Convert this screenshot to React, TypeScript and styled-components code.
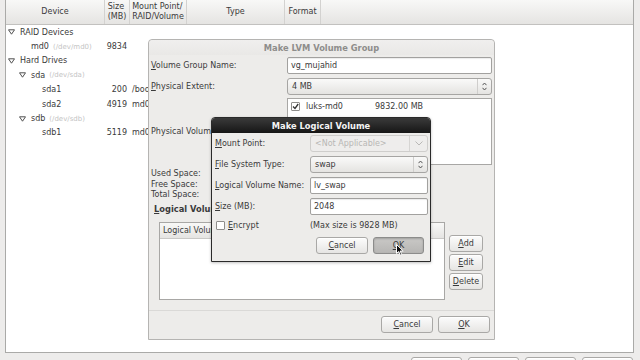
import React from "react";
import styled, { createGlobalStyle } from "styled-components";

const GlobalStyle = createGlobalStyle`
  html, body { margin: 0; padding: 0; background: #edeceb; }
  * { box-sizing: border-box; }
`;

const FONT = `"DejaVu Sans", "Liberation Sans", sans-serif`;
const TEXT = "#3a3a3a";
const COLS = "99px 25px 57px 98px 36px 1fr";

const Screen = styled.div`
  position: relative;
  width: 640px;
  height: 360px;
  overflow: hidden;
  background: #edeceb;
  display: flex;
  flex-direction: column;
  padding: 0 6px 0 5px;
  font-family: ${FONT};
  font-size: 8px;
  color: ${TEXT};
`;

const TreePanel = styled.div`
  height: 353px;
  flex: none;
  background: #fff;
  border: 1px solid #aaaaa8;
  border-top: none;
  display: flex;
  flex-direction: column;
`;

const TreeHeader = styled.div`
  height: 25px;
  flex: none;
  display: grid;
  grid-template-columns: ${COLS};
  background: linear-gradient(#f8f8f7, #e5e4e2);
  border-bottom: 1px solid #c2c1bf;
`;

const HeaderCell = styled.div`
  display: flex;
  align-items: center;
  justify-content: center;
  border-right: 1px solid #d3d2d0;
  line-height: 10px;
  white-space: pre;
  text-align: left;
  &:last-child { border-right: none; }
`;

const TreeRow = styled.div`
  height: 14.4px;
  display: grid;
  grid-template-columns: ${COLS};
  align-items: center;
  white-space: nowrap;
`;

const DeviceCell = styled.div<{ $level: number }>`
  display: flex;
  align-items: center;
  padding-left: ${(p) => 2 + p.$level * 11}px;
`;

const ExpanderSlot = styled.span`
  width: 12px;
  flex: none;
  display: flex;
  align-items: center;
`;

const DevPath = styled.span`
  font-size: 7px;
  color: #c4c4c4;
  margin-left: 4px;
`;

const SizeCell = styled.div`
  text-align: right;
  padding-right: 3px;
`;

const MountCell = styled.div`
  padding-left: 2px;
  overflow: hidden;
`;

const Footer = styled.div`
  display: flex;
  justify-content: flex-end;
  gap: 6px;
  padding: 4px 1px 0 0;
`;

const Button = styled.div<{ $w?: number; $pressed?: boolean }>`
  width: ${(p) => p.$w ?? 52}px;
  height: 17px;
  flex: none;
  display: flex;
  align-items: center;
  justify-content: center;
  border: 1px solid ${(p) => (p.$pressed ? "#8c8c8b" : "#a9a8a6")};
  border-radius: 3px;
  background: ${(p) =>
    p.$pressed ? "linear-gradient(#c9c8c6, #b7b6b4)" : "linear-gradient(#fcfcfc, #e6e5e3)"};
  box-shadow: ${(p) => (p.$pressed ? "inset 0 1px 2px rgba(0,0,0,0.2)" : "inset 0 1px 0 #fff")};
  color: ${TEXT};
`;

const U = styled.span`
  text-decoration: underline;
`;

/* ---------- LVM dialog ---------- */

const LvmDialog = styled.div`
  position: absolute;
  left: 148px;
  top: 39px;
  width: 347px;
  height: 301px;
  background: #edecea;
  border: 1px solid #b5b4b2;
  border-radius: 4px 4px 0 0;
  display: flex;
  flex-direction: column;
`;

const InactiveTitle = styled.div`
  height: 15px;
  flex: none;
  display: flex;
  align-items: center;
  justify-content: center;
  font-weight: bold;
  font-size: 8.3px;
  color: #8e8d8b;
  background: linear-gradient(#f0efee, #e9e8e6);
  border-radius: 4px 4px 0 0;
`;

const LvmBody = styled.div`
  flex: 1;
  display: flex;
  flex-direction: column;
  padding: 2px 2px 0 2px;
`;

const FormRow = styled.div<{ $h: number; $mt: number; $label?: number }>`
  display: grid;
  grid-template-columns: ${(p) => p.$label ?? 136}px 1fr;
  align-items: center;
  height: ${(p) => p.$h}px;
  margin-top: ${(p) => p.$mt}px;
  flex: none;
`;

const Entry = styled.div`
  height: 17px;
  background: #fff;
  border: 1px solid #a2a19f;
  border-radius: 2px;
  box-shadow: inset 0 1px 1px rgba(0, 0, 0, 0.08);
  display: flex;
  align-items: center;
  padding-left: 3px;
`;

const Combo = styled.div<{ $disabled?: boolean; $btn: number }>`
  height: 17px;
  display: grid;
  grid-template-columns: 1fr ${(p) => p.$btn}px;
  align-items: center;
  border: 1px solid ${(p) => (p.$disabled ? "#cfcecc" : "#a6a5a3")};
  border-radius: 3px;
  background: ${(p) => (p.$disabled ? "#eeedec" : "linear-gradient(#fafaf9, #e4e3e1)")};
  color: ${(p) => (p.$disabled ? "#b8b7b5" : TEXT)};
`;

const ComboText = styled.span`
  padding-left: 4px;
`;

const ComboButton = styled.span<{ $disabled?: boolean }>`
  height: 100%;
  display: flex;
  align-items: center;
  justify-content: center;
  border-left: 1px solid ${(p) => (p.$disabled ? "#d6d5d3" : "#cfcecc")};
`;

const ListBox = styled.div<{ $h: number }>`
  height: ${(p) => p.$h}px;
  background: #fff;
  border: 1px solid #a8a7a5;
  display: flex;
  flex-direction: column;
`;

const PvRow = styled.div`
  display: grid;
  grid-template-columns: 15px 69px 1fr;
  align-items: center;
  height: 14px;
  padding: 1px 0 0 3px;
`;

const CheckBox = styled.span<{ $checked?: boolean }>`
  width: 9px;
  height: 9px;
  border: 1px solid #8f8e8c;
  border-radius: 1px;
  background: #fff;
  display: flex;
  align-items: center;
  justify-content: center;
`;

const SpaceInfo = styled.div`
  margin-top: 4px;
  display: flex;
  flex-direction: column;
  flex: none;
`;

const SpaceLine = styled.div`
  height: 10.5px;
  line-height: 10.5px;
`;

const SectionLabel = styled.div`
  font-weight: bold;
  font-size: 8.3px;
  height: 10px;
  line-height: 10px;
  margin: 3px 0 0 3px;
  flex: none;
`;

const LvSection = styled.div`
  display: flex;
  gap: 4px;
  margin: 8px 0 0 8px;
  flex: none;
`;

const LvList = styled.div`
  width: 286px;
  height: 78px;
  background: #fff;
  border: 1px solid #a8a7a5;
  display: flex;
  flex-direction: column;
`;

const ListHeader = styled.div`
  height: 16px;
  flex: none;
  display: grid;
  grid-template-columns: 110px 80px 1fr;
  background: linear-gradient(#f8f8f7, #e5e4e2);
  border-bottom: 1px solid #c9c8c6;
`;

const ListHeaderCell = styled.div`
  display: flex;
  align-items: center;
  padding-left: 3px;
  border-right: 1px solid #d3d2d0;
  white-space: nowrap;
  overflow: hidden;
  &:last-child { border-right: none; }
`;

const SideButtons = styled.div`
  display: flex;
  flex-direction: column;
  gap: 2px;
  padding-top: 13px;
`;

const ActionArea = styled.div`
  margin-top: auto;
  border-top: 1px solid #dad9d7;
  display: flex;
  justify-content: flex-end;
  gap: 5px;
  padding: 5px 4px 6px 0;
  margin-left: -2px;
  margin-right: -2px;
  flex: none;
`;

/* ---------- Logical volume dialog ---------- */

const LvDialog = styled.div`
  position: absolute;
  left: 211px;
  top: 117px;
  width: 220px;
  height: 145px;
  background: #edecea;
  border: 1px solid #2a2a2a;
  border-radius: 4px 4px 0 0;
  display: flex;
  flex-direction: column;
  box-shadow: 0 1px 3px rgba(0, 0, 0, 0.25);
`;

const ActiveTitle = styled.div`
  height: 15px;
  flex: none;
  display: flex;
  align-items: center;
  justify-content: center;
  font-weight: bold;
  font-size: 8.3px;
  color: #f4f4f4;
  background: linear-gradient(#3a3a3a, #161616);
  border-radius: 3px 3px 0 0;
`;

const LvBody = styled.div`
  flex: 1;
  display: flex;
  flex-direction: column;
  padding: 2px 2px 0 3px;
`;

const EncryptRow = styled.div`
  display: grid;
  grid-template-columns: 95px 1fr;
  align-items: center;
  height: 12px;
  margin-top: 4px;
`;

const CheckLabel = styled.span`
  display: flex;
  align-items: center;
  gap: 3px;
  padding-left: 1px;
`;

const LvActions = styled.div`
  display: flex;
  justify-content: flex-end;
  gap: 5px;
  margin-top: 6px;
  padding-right: 4px;
`;

const Cursor = styled.svg`
  position: absolute;
  left: 396px;
  top: 244px;
`;

/* ---------- icons ---------- */

const Expander = () => (
  <svg width="7" height="6" viewBox="0 0 7 6">
    <polygon points="0.5,0.8 6.5,0.8 3.5,5.2" fill="#fff" stroke="#505050" strokeWidth="1" strokeLinejoin="round" />
  </svg>
);

const Spinner = () => (
  <svg width="5" height="9" viewBox="0 0 5 9">
    <polyline points="0.5,3.2 2.5,1 4.5,3.2" fill="none" stroke="#555" strokeWidth="1" />
    <polyline points="0.5,5.8 2.5,8 4.5,5.8" fill="none" stroke="#555" strokeWidth="1" />
  </svg>
);

const Chevron = () => (
  <svg width="8" height="5" viewBox="0 0 8 5">
    <polyline points="0.5,0.5 4,4 7.5,0.5" fill="none" stroke="#b9b8b6" strokeWidth="1" />
  </svg>
);

const Tick = () => (
  <svg width="7" height="7" viewBox="0 0 7 7">
    <polyline points="1,3.5 3,5.5 6.2,1" fill="none" stroke="#333" strokeWidth="1.3" />
  </svg>
);

type Dev = { level: number; name: string; exp?: boolean; path?: string; size?: string; mount?: string };

const devices: Dev[] = [
  { level: 0, name: "RAID Devices", exp: true },
  { level: 1, name: "md0", path: "(/dev/md0)", size: "9834" },
  { level: 0, name: "Hard Drives", exp: true },
  { level: 1, name: "sda", path: "(/dev/sda)", exp: true },
  { level: 2, name: "sda1", size: "200", mount: "/boot" },
  { level: 2, name: "sda2", size: "4919", mount: "md0" },
  { level: 1, name: "sdb", path: "(/dev/sdb)", exp: true },
  { level: 2, name: "sdb1", size: "5119", mount: "md0" },
];

export default function App() {
  return (
    <>
      <GlobalStyle />
      <Screen>
        <TreePanel>
          <TreeHeader>
            <HeaderCell>Device</HeaderCell>
            <HeaderCell>{"Size\n(MB)"}</HeaderCell>
            <HeaderCell>{"Mount Point/\nRAID/Volume"}</HeaderCell>
            <HeaderCell>Type</HeaderCell>
            <HeaderCell>Format</HeaderCell>
            <HeaderCell />
          </TreeHeader>
          {devices.map((d, i) => (
            <TreeRow key={i}>
              <DeviceCell $level={d.level}>
                <ExpanderSlot>{d.exp && <Expander />}</ExpanderSlot>
                <span>{d.name}</span>
                {d.path && <DevPath>{d.path}</DevPath>}
              </DeviceCell>
              <SizeCell>{d.size}</SizeCell>
              <MountCell>{d.mount}</MountCell>
              <div />
              <div />
              <div />
            </TreeRow>
          ))}
        </TreePanel>
        <Footer>
          <Button $w={51} />
          <Button $w={51} />
          <Button $w={51} />
          <Button $w={51} />
        </Footer>

        <LvmDialog>
          <InactiveTitle>Make LVM Volume Group</InactiveTitle>
          <LvmBody>
            <FormRow $h={17} $mt={0}>
              <span>
                <U>V</U>olume Group Name:
              </span>
              <Entry>vg_mujahid</Entry>
            </FormRow>
            <FormRow $h={17} $mt={4}>
              <span>
                <U>P</U>hysical Extent:
              </span>
              <Combo $btn={14}>
                <ComboText>4 MB</ComboText>
                <ComboButton>
                  <Spinner />
                </ComboButton>
              </Combo>
            </FormRow>
            <FormRow $h={67} $mt={3}>
              <span>Physical Volumes to Use:</span>
              <ListBox $h={67}>
                <PvRow>
                  <CheckBox $checked>
                    <Tick />
                  </CheckBox>
                  <span>luks-md0</span>
                  <span>9832.00 MB</span>
                </PvRow>
              </ListBox>
            </FormRow>
            <SpaceInfo>
              <SpaceLine>Used Space:</SpaceLine>
              <SpaceLine>Free Space:</SpaceLine>
              <SpaceLine>Total Space:</SpaceLine>
            </SpaceInfo>
            <SectionLabel>
              <U>L</U>ogical Volumes
            </SectionLabel>
            <LvSection>
              <LvList>
                <ListHeader>
                  <ListHeaderCell>Logical Volume Name</ListHeaderCell>
                  <ListHeaderCell>Mount Point</ListHeaderCell>
                  <ListHeaderCell>Size (MB)</ListHeaderCell>
                </ListHeader>
              </LvList>
              <SideButtons>
                <Button $w={34}>
                  <U>A</U>dd
                </Button>
                <Button $w={34}>
                  <U>E</U>dit
                </Button>
                <Button $w={34}>
                  <U>D</U>elete
                </Button>
              </SideButtons>
            </LvSection>
            <ActionArea>
              <Button>
                <U>C</U>ancel
              </Button>
              <Button>
                <U>O</U>K
              </Button>
            </ActionArea>
          </LvmBody>
        </LvmDialog>

        <LvDialog>
          <ActiveTitle>Make Logical Volume</ActiveTitle>
          <LvBody>
            <FormRow $h={17} $mt={0} $label={95}>
              <span>
                <U>M</U>ount Point:
              </span>
              <Combo $disabled $btn={18}>
                <ComboText>&lt;Not Applicable&gt;</ComboText>
                <ComboButton $disabled>
                  <Chevron />
                </ComboButton>
              </Combo>
            </FormRow>
            <FormRow $h={17} $mt={4} $label={95}>
              <span>
                <U>F</U>ile System Type:
              </span>
              <Combo $btn={14}>
                <ComboText>swap</ComboText>
                <ComboButton>
                  <Spinner />
                </ComboButton>
              </Combo>
            </FormRow>
            <FormRow $h={17} $mt={4} $label={95}>
              <span>
                <U>L</U>ogical Volume Name:
              </span>
              <Entry>lv_swap</Entry>
            </FormRow>
            <FormRow $h={17} $mt={4} $label={95}>
              <span>
                <U>S</U>ize (MB):
              </span>
              <Entry>2048</Entry>
            </FormRow>
            <EncryptRow>
              <CheckLabel>
                <CheckBox />
                <span>
                  <U>E</U>ncrypt
                </span>
              </CheckLabel>
              <span>(Max size is 9828 MB)</span>
            </EncryptRow>
            <LvActions>
              <Button>
                <U>C</U>ancel
              </Button>
              <Button $w={51} $pressed>
                <U>O</U>K
              </Button>
            </LvActions>
          </LvBody>
        </LvDialog>

        <Cursor width="8" height="12" viewBox="0 0 8 12">
          <polygon
            points="0.5,0.5 0.5,9.5 2.7,7.5 4.3,11.2 5.7,10.6 4.2,7 7.2,7"
            fill="#111"
            stroke="#fff"
            strokeWidth="1"
            strokeLinejoin="round"
          />
        </Cursor>
      </Screen>
    </>
  );
}
